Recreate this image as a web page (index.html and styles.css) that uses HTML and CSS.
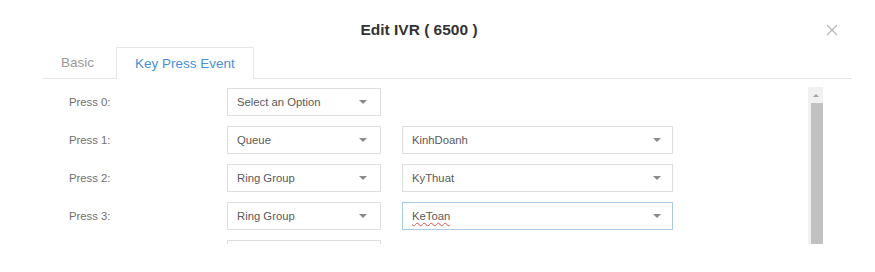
FILE: index.html
```html
<!DOCTYPE html>
<html lang="en">
<head>
    <meta charset="UTF-8">
    <meta name="viewport" content="width=device-width, initial-scale=1.0">
    <title>Edit IVR</title>
    <link rel="stylesheet" href="styles.css">
</head>
<body>
    <div class="modal">
        <header class="modal-header">
            <span></span>
            <h1 class="modal-title">Edit IVR ( 6500 )</h1>
            <button class="close-btn" aria-label="Close">
                <svg width="12" height="12" viewBox="0 0 12 12">
                    <path d="M1 1 L11 11 M11 1 L1 11" stroke="#b5b5b5" stroke-width="1.2" fill="none"/>
                </svg>
            </button>
        </header>

        <ul class="tabs">
            <li class="tab">Basic</li>
            <li class="tab active">Key Press Event</li>
        </ul>

        <div class="scroll-row">
            <div class="scroll-content">
                <div class="form-row">
                    <label class="key-label">Press 0:</label>
                    <div class="select"><span>Select an Option</span><i class="caret"></i></div>
                </div>
                <div class="form-row">
                    <label class="key-label">Press 1:</label>
                    <div class="select"><span>Queue</span><i class="caret"></i></div>
                    <div class="select wide"><span>KinhDoanh</span><i class="caret"></i></div>
                </div>
                <div class="form-row">
                    <label class="key-label">Press 2:</label>
                    <div class="select"><span>Ring Group</span><i class="caret"></i></div>
                    <div class="select wide"><span>KyThuat</span><i class="caret"></i></div>
                </div>
                <div class="form-row">
                    <label class="key-label">Press 3:</label>
                    <div class="select"><span>Ring Group</span><i class="caret"></i></div>
                    <div class="select wide focused"><span class="misspelled">KeToan</span><i class="caret"></i></div>
                </div>
                <!-- next row is scrolled out of view, only its box top shows -->
                <div class="form-row">
                    <span class="key-label"></span>
                    <div class="select"></div>
                </div>
            </div>
            <div class="scrollbar">
                <div class="scroll-up"><i class="up-arrow"></i></div>
                <div class="scroll-thumb"></div>
            </div>
        </div>
    </div>
</body>
</html>
```

FILE: styles.css
```css
body {
    margin: 0;
    padding: 0;
    background-color: #fff;
    font-family: "Liberation Sans", Arial, sans-serif;
}

.modal {
    width: 875px;
    height: 272px;
    overflow: hidden;
}

/* Title bar */
.modal-header {
    display: grid;
    grid-template-columns: 1fr auto 1fr;
    align-items: center;
    height: 34px;
    margin-top: 13px;
    padding-right: 37px;
}

.modal-title {
    margin: 0;
    font-size: 15.5px;
    font-weight: bold;
    color: #333;
}

.close-btn {
    justify-self: end;
    border: none;
    background: none;
    padding: 0;
    width: 12px;
    height: 12px;
    display: flex;
}

/* Tabs */
.tabs {
    list-style-type: none;
    margin: 0 23px 0 43px;
    padding: 0;
    display: flex;
    gap: 4px;
    height: 31px;
    border-bottom: 1px solid #e6e6e6;
}

.tab {
    padding: 0 18px;
    line-height: 32px;
    font-size: 13.5px;
    color: #9a9a9a;
}

.tab.active {
    color: #4a8fd8;
    background-color: #fff;
    border: 1px solid #e6e6e6;
    border-bottom: none;
    line-height: 31px;
    height: 32px;
    box-sizing: border-box;
    margin-bottom: -1px;
}

/* Scrolling form area */
.scroll-row {
    display: flex;
    margin: 8px 0 0 43px;
    width: 780px;
    height: 157px;
}

.scroll-content {
    flex: 1;
    overflow: hidden;
    padding-top: 1px;
    display: flex;
    flex-direction: column;
    gap: 10px;
}

.form-row {
    display: flex;
    align-items: center;
    gap: 21px;
    padding-left: 26px;
    flex-shrink: 0;
}

.key-label {
    width: 137px;
    font-size: 11.3px;
    color: #707070;
}

.select {
    display: flex;
    align-items: center;
    justify-content: space-between;
    box-sizing: border-box;
    width: 154px;
    height: 28px;
    padding: 0 13px 0 9px;
    border: 1px solid #dedede;
    font-size: 11.3px;
    color: #5a5a5a;
}

.select.wide {
    width: 271px;
    padding-right: 11px;
}

.select.focused {
    border-color: #a9c9e8;
}

.misspelled {
    text-decoration: underline wavy #e05050;
    text-decoration-thickness: 1px;
    text-underline-offset: 2px;
}

.caret {
    width: 0;
    height: 0;
    border-left: 4px solid transparent;
    border-right: 4px solid transparent;
    border-top: 4px solid #8a8a8a;
}

/* Fake scrollbar, drawn in the right column */
.scrollbar {
    width: 15px;
    display: flex;
    flex-direction: column;
    background-color: #f1f1f1;
}

.scroll-up {
    height: 16px;
    display: flex;
    align-items: center;
    justify-content: center;
}

.up-arrow {
    width: 0;
    height: 0;
    border-left: 3px solid transparent;
    border-right: 3px solid transparent;
    border-bottom: 3px solid #a3a3a3;
}

.scroll-thumb {
    flex: 1;
    margin-left: 3px;
    background-color: #c1c1c1;
}
```
